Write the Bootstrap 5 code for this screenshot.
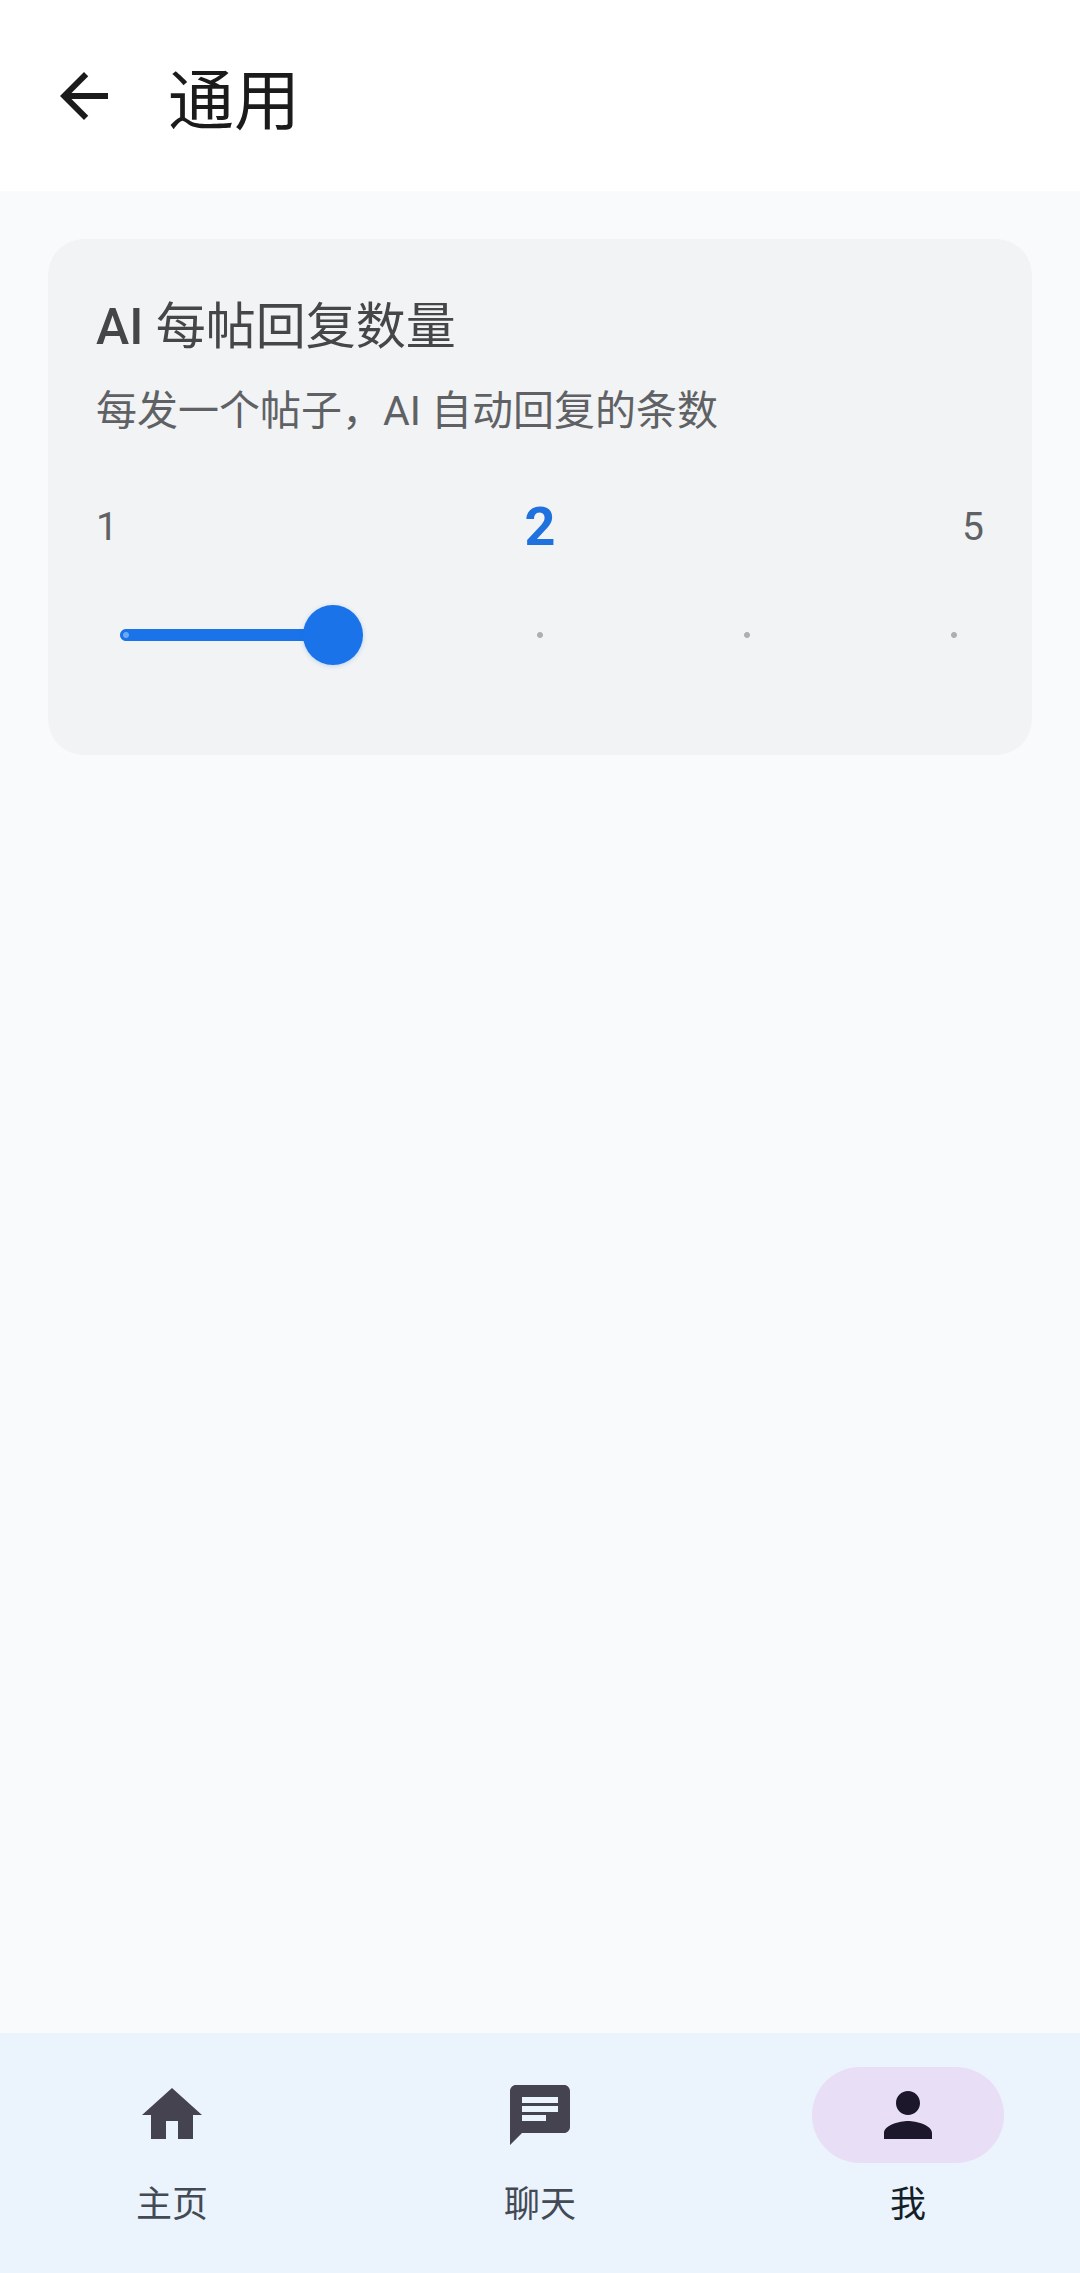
<!DOCTYPE html>
<html lang="zh-CN">
<head>
<meta charset="utf-8">
<meta name="viewport" content="width=device-width, initial-scale=1">
<title>通用</title>
<link rel="stylesheet" href="https://cdn.jsdelivr.net/npm/bootstrap@5.3.0/dist/css/bootstrap.min.css">
<style>
  body { font-family: Roboto, "Noto Sans CJK SC", sans-serif; background: #f8fafc; color: #1c1b1b; }
  .app-bar { height: 191px; padding: 0 48px; gap: 48px; }
  .app-bar .btn { color: #1c1b1b; }
  .glyph { display: block; width: 72px; height: 72px; fill: currentColor; }
  .app-title { font-size: 66px; line-height: 84px; font-weight: 400; padding-top: 12px; }
  .app-main { padding: 48px; }
  .setting { background: #f1f3f4; border-radius: 36px; padding: 52px 48px 48px; }
  .setting-title { font-size: 50px; line-height: 72px; font-weight: 500; color: #444648; }
  .setting-title .zh { font-weight: 400; }
  .setting-note { font-size: 41px; line-height: 72px; color: #5f6164; margin-top: 12px; margin-bottom: 44px; }
  .scale-row { font-size: 39px; line-height: 72px; color: #5f6164; }
  .scale-value { font-size: 54px; font-weight: 700; color: #1f72de; }
  .stepper {
    --stop: #adafb0;
    --span: calc(100% - 60px);
    appearance: none; -webkit-appearance: none;
    display: block; width: 100%; height: 144px; margin: 0;
    background:
      radial-gradient(circle at 30px 50%, #6ba9f7 2.5px, transparent 3.5px),
      radial-gradient(circle at 30px 50%, #1a73e8 5.5px, transparent 6.5px),
      linear-gradient(#1a73e8, #1a73e8) 30px 50% / calc((100% - 60px) * var(--fill)) 12px no-repeat,
      radial-gradient(circle at calc(30px + var(--span) * .25) 50%, var(--stop) 2.5px, transparent 3.5px),
      radial-gradient(circle at 50% 50%, var(--stop) 2.5px, transparent 3.5px),
      radial-gradient(circle at calc(30px + var(--span) * .75) 50%, var(--stop) 2.5px, transparent 3.5px),
      radial-gradient(circle at calc(100% - 30px) 50%, var(--stop) 2.5px, transparent 3.5px);
  }
  .stepper::-webkit-slider-runnable-track { height: 60px; background: transparent; }
  .stepper::-webkit-slider-thumb {
    -webkit-appearance: none; width: 60px; height: 60px; border-radius: 50%;
    background: #1a73e8; box-shadow: 0 1px 4px rgba(26, 115, 232, .25);
  }
  .stepper::-moz-range-thumb { width: 60px; height: 60px; border: 0; background: #1a73e8; }
  .tab-bar { height: 240px; padding-top: 34px; gap: 24px; background: #ebf3fd; }
  .tab-link { color: #434a54; font-size: 36px; line-height: 48px; gap: 18px; flex: 1 1 0; }
  .tab-link .glyph { color: #464350; }
  .tab-pill { width: 192px; height: 96px; border-radius: 48px; }
  .tab-link.active { color: #141f27; }
  .tab-link.active .tab-pill { background: #e8def6; }
  .tab-link.active .glyph { color: #1d172b; }
</style>
</head>
<body class="d-flex flex-column min-vh-100">
  <header class="app-bar bg-white d-flex align-items-center">
    <button type="button" class="btn p-0 border-0" aria-label="返回">
      <svg class="glyph" viewBox="0 0 24 24" aria-hidden="true"><path d="M20 11H7.83l5.59-5.59L12 4l-8 8 8 8 1.41-1.41L7.83 13H20v-2z"/></svg>
    </button>
    <h1 class="app-title mb-0">通用</h1>
  </header>

  <main class="app-main flex-grow-1">
    <section class="setting">
      <label for="replies" class="setting-title d-block">AI <span class="zh">每帖回复数量</span></label>
      <p class="setting-note" id="note">每发一个帖子，AI 自动回复的条数</p>
      <div class="scale-row d-flex justify-content-between align-items-center">
        <span>1</span>
        <output class="scale-value p-0" for="replies" id="value">2</output>
        <span>5</span>
      </div>
      <input type="range" class="stepper" id="replies" min="1" max="5" step="1" value="2" aria-describedby="note" style="--fill: .25">
    </section>
  </main>

  <nav class="tab-bar d-flex align-items-start" aria-label="主导航">
    <a href="#home" class="tab-link d-flex flex-column align-items-center text-decoration-none">
      <span class="tab-pill d-flex align-items-center justify-content-center">
        <svg class="glyph" viewBox="0 0 24 24" aria-hidden="true"><path d="M10 20v-6h4v6h5v-8h3L12 3 2 12h3v8z"/></svg>
      </span>
      <span>主页</span>
    </a>
    <a href="#chat" class="tab-link d-flex flex-column align-items-center text-decoration-none">
      <span class="tab-pill d-flex align-items-center justify-content-center">
        <svg class="glyph" viewBox="0 0 24 24" aria-hidden="true"><path fill-rule="evenodd" d="M20 2H4c-1.100 0-2 .9-2 2v18l4-4h14c1.100 0 2-.9 2-2V4c0-1.100-.9-2-2-2zM6 6h12v2H6zM6 9h12v2H6zM6 12h8v2H6z"/></svg>
      </span>
      <span>聊天</span>
    </a>
    <a href="#me" class="tab-link active d-flex flex-column align-items-center text-decoration-none" aria-current="page">
      <span class="tab-pill d-flex align-items-center justify-content-center">
        <svg class="glyph" viewBox="0 0 24 24" aria-hidden="true"><path d="M12 12c2.210 0 4-1.790 4-4s-1.790-4-4-4-4 1.790-4 4 1.790 4 4 4zm0 2c-2.670 0-8 1.340-8 4v2h16v-2c0-2.660-5.330-4-8-4z"/></svg>
      </span>
      <span>我</span>
    </a>
  </nav>

  <script src="https://cdn.jsdelivr.net/npm/bootstrap@5.3.0/dist/js/bootstrap.bundle.min.js"></script>
  <script>
    const slider = document.getElementById('replies');
    slider.addEventListener('input', () => {
      document.getElementById('value').textContent = slider.value;
      slider.style.setProperty('--fill', (slider.value - 1) / 4);
    });
  </script>
</body>
</html>
